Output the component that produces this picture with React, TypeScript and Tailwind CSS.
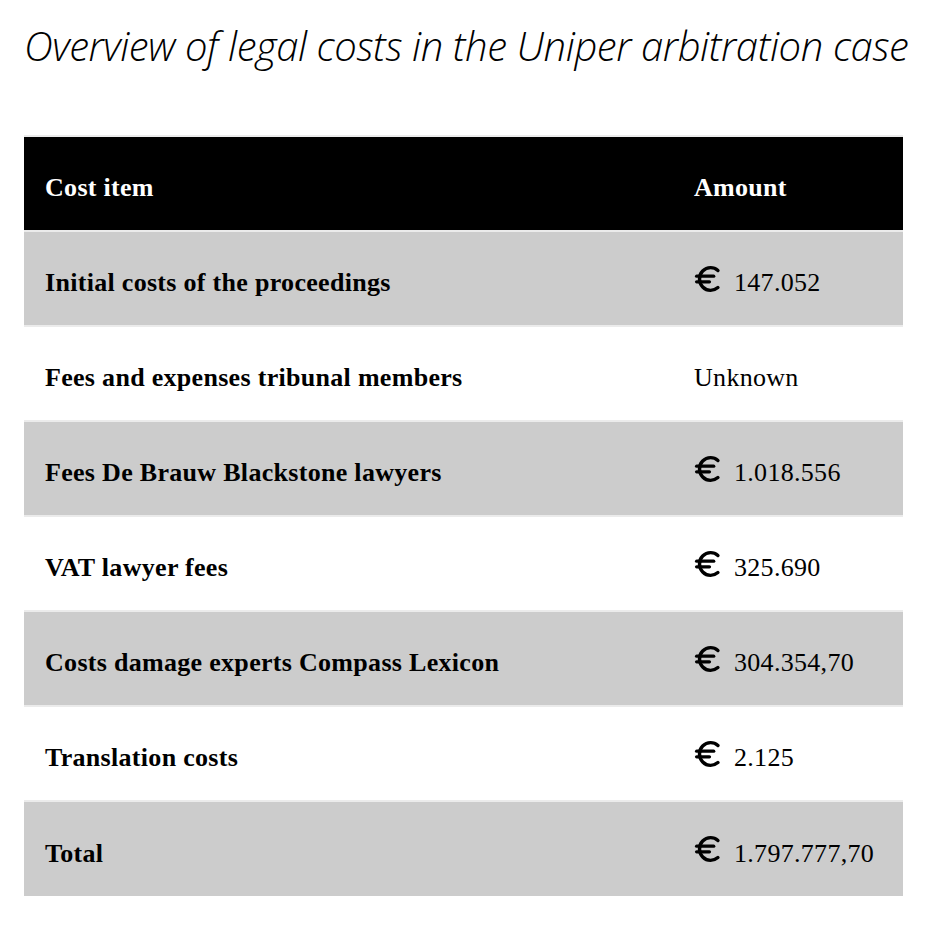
import { Euro } from 'lucide-react';

const rows: { item: string; amount: string; euro: boolean }[] = [
  { item: 'Initial costs of the proceedings', amount: '147.052', euro: true },
  { item: 'Fees and expenses tribunal members', amount: 'Unknown', euro: false },
  { item: 'Fees De Brauw Blackstone lawyers', amount: '1.018.556', euro: true },
  { item: 'VAT lawyer fees', amount: '325.690', euro: true },
  { item: 'Costs damage experts Compass Lexicon', amount: '304.354,70', euro: true },
  { item: 'Translation costs', amount: '2.125', euro: true },
  { item: 'Total', amount: '1.797.777,70', euro: true },
];

export default function App() {
  return (
    <div className="min-h-screen bg-white px-6 pt-[22px]">
      <h1 className="font-['Open_Sans',sans-serif] text-[40px] font-light italic leading-[48px] tracking-[-0.4px] text-black">
        Overview of legal costs in the Uniper arbitration case
      </h1>

      <table className="mt-[65px] w-[879px] border-collapse font-['Liberation_Serif',serif] text-[26px] tracking-[0.3px]">
        <thead>
          <tr className="h-[95px] border-t-2 border-[#ebebeb] bg-black text-white">
            <th className="w-[649px] pl-[21px] pt-2 text-left font-bold">Cost item</th>
            <th className="pl-[21px] pt-2 text-left font-bold">Amount</th>
          </tr>
        </thead>
        <tbody>
          {rows.map((r, i) => (
            <tr
              key={r.item}
              className={
                i % 2 === 0
                  ? 'h-[95px] border-t-2 border-[#ebebeb] bg-[#cccccc] text-black'
                  : 'h-[95px] border-t-2 border-[#ebebeb] bg-white text-black'
              }
            >
              <td className="pl-[21px] pt-2 font-bold">{r.item}</td>
              <td className="pl-[21px] pt-2">
                <div className="flex items-center">
                  {r.euro && <Euro size={34} strokeWidth={2.4} className="-ml-[3px] mr-[9px] -mt-[8px] shrink-0" />}
                  <span>{r.amount}</span>
                </div>
              </td>
            </tr>
          ))}
        </tbody>
      </table>
    </div>
  );
}
